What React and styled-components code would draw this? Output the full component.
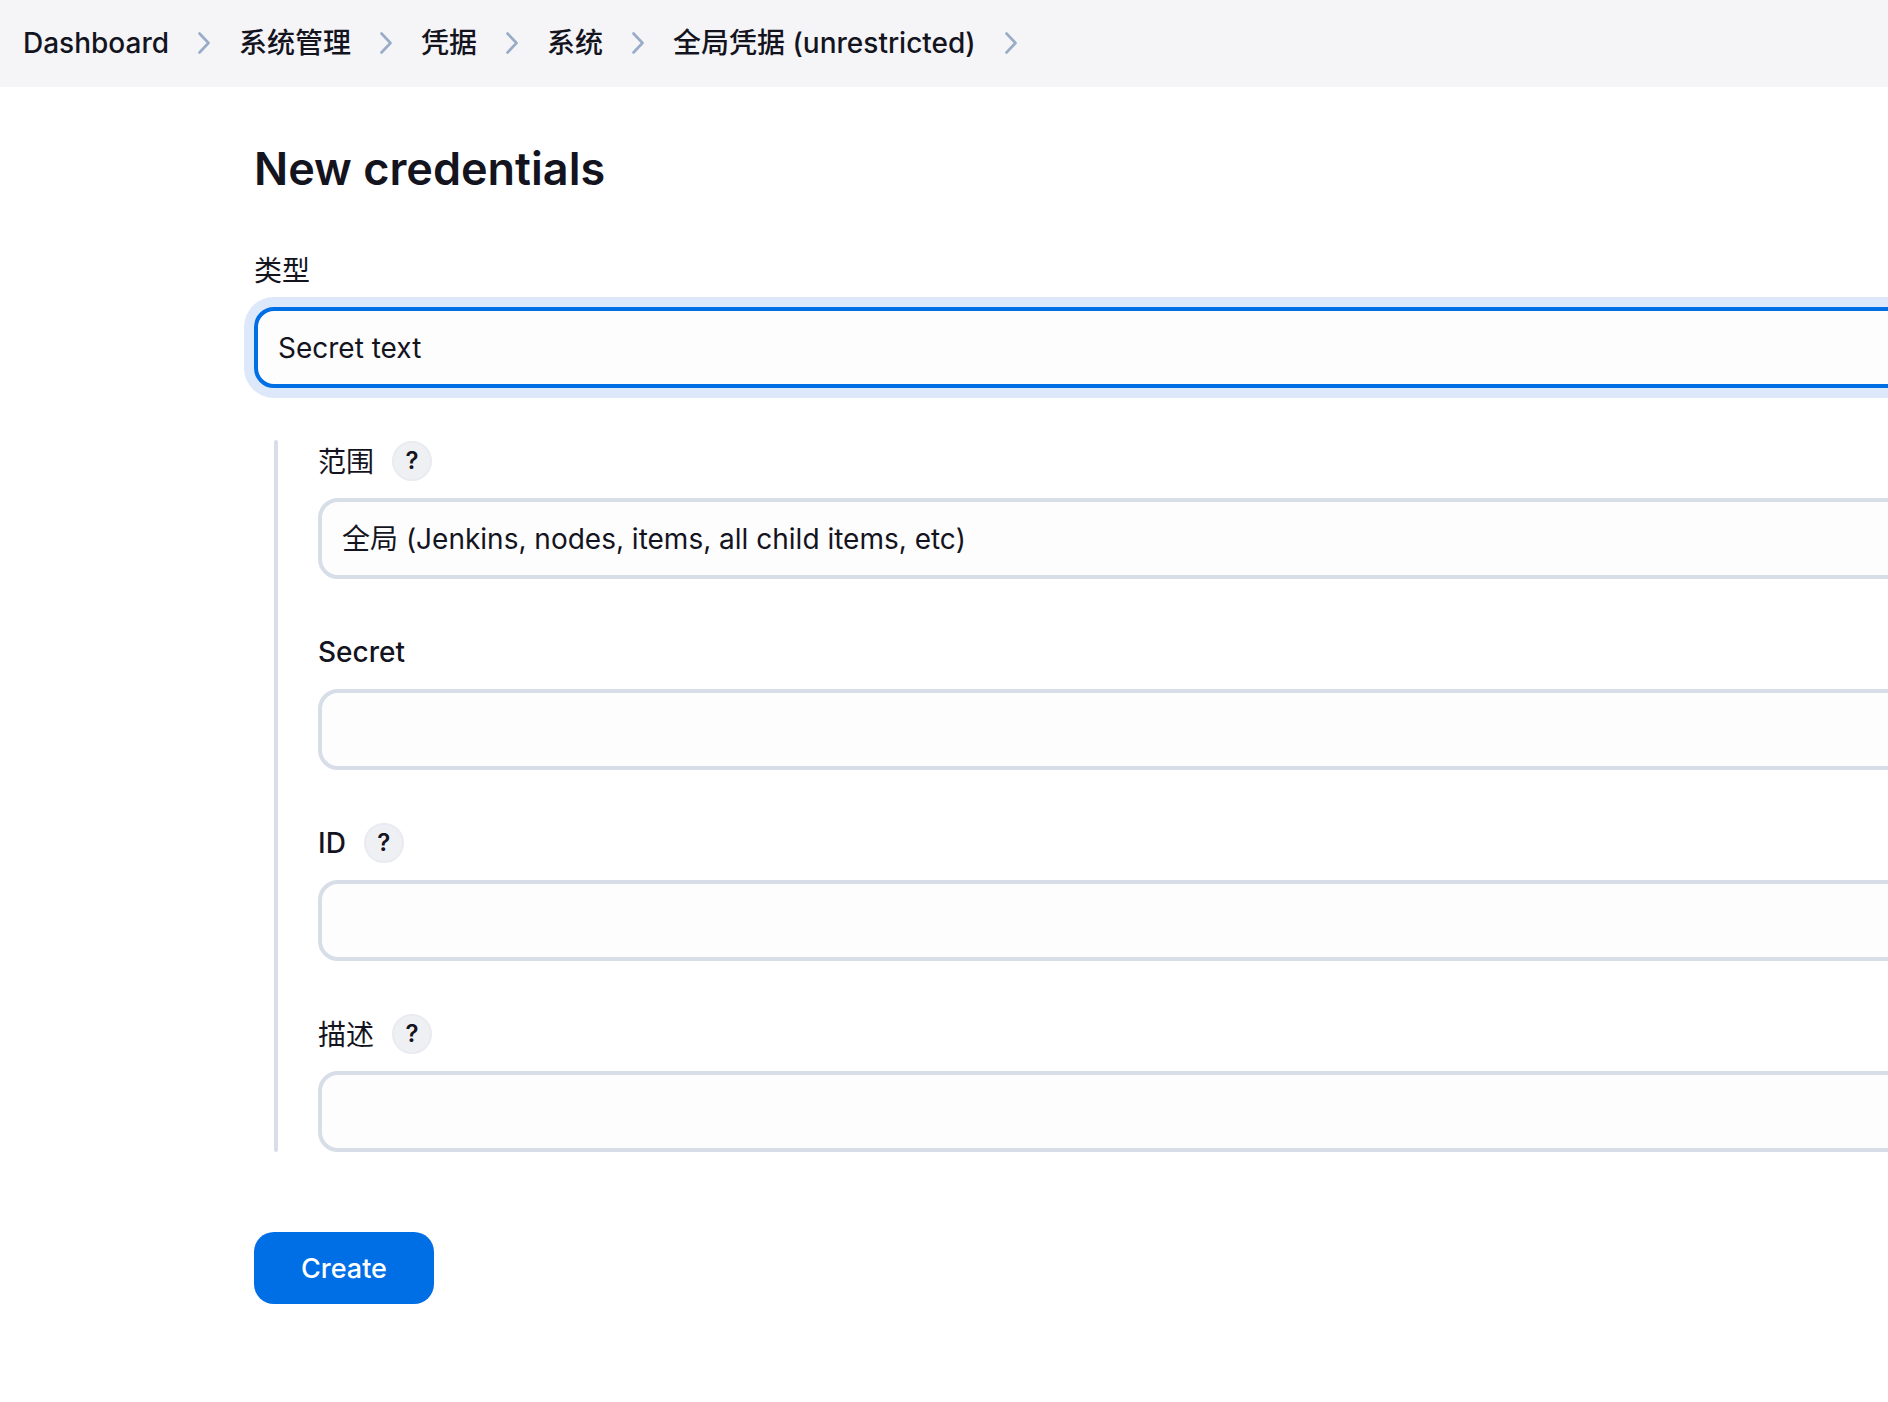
import React from "react";
import styled, { createGlobalStyle } from "styled-components";

const GlobalStyle = createGlobalStyle`
  *, *::before, *::after { box-sizing: border-box; }
  body {
    margin: 0;
    background: #fff;
    color: #14141f;
    font-family: Inter, "Noto Sans CJK SC", sans-serif;
    font-size: 28px;
    line-height: 42px;
  }
`;

const Page = styled.div`
  min-height: 100vh;
  overflow-x: clip;
`;

const Breadcrumbs = styled.nav`
  background: #f5f5f8;
  padding: 22px 23px 23px;
`;

const CrumbList = styled.ol`
  display: flex;
  align-items: center;
  gap: 29px;
  margin: 0;
  padding: 0;
  list-style: none;
`;

const Crumb = styled.li`
  display: flex;
  align-items: center;
  gap: 29px;
  white-space: nowrap;
`;

const CrumbLink = styled.a`
  color: inherit;
  font-weight: 500;
  text-decoration: none;
`;

const Chevron = styled.svg`
  flex: none;
  width: 12px;
  height: 22px;
  fill: none;
  stroke: #98acc7;
  stroke-width: 2.6;
  stroke-linecap: round;
  stroke-linejoin: round;
`;

const Main = styled.main`
  margin-right: -60px;
  padding: 54px 0 98px 254px;
`;

const Title = styled.h1`
  margin: 0 0 52px;
  font-size: 45px;
  font-weight: 600;
  line-height: 56px;
`;

const Form = styled.form`
  display: flex;
  flex-direction: column;
  gap: 52px;
`;

const Group = styled.div`
  position: relative;
  display: flex;
  flex-direction: column;
  gap: 52px;
  margin-left: 20px;
  padding-left: 44px;

  &::before {
    content: "";
    position: absolute;
    inset: 0 auto 0 0;
    width: 4px;
    border-radius: 2px;
    background: #d8dee8;
  }
`;

const Field = styled.div`
  display: flex;
  flex-direction: column;
  gap: 16px;
`;

const LabelRow = styled.div`
  display: flex;
  align-items: center;
  gap: 18px;
`;

const Label = styled.label`
  padding-top: ${(p) => (p.$light ? 2 : 0)}px;
  font-weight: ${(p) => (p.$light ? 400 : 500)};
  line-height: ${(p) => (p.$light ? 40 : 42)}px;
`;

const HelpButton = styled.button`
  display: grid;
  place-items: center;
  width: 40px;
  height: 40px;
  padding: 0;
  border: 2px solid #e9ebf1;
  border-radius: 50%;
  background: #eff0f4;
  color: inherit;
  font: 600 24px/36px Inter, sans-serif;
`;

const control = `
  appearance: none;
  display: block;
  width: 100%;
  height: 81px;
  padding: 0 20px;
  border: 4px solid #d7dee8;
  border-radius: 20px;
  outline: none;
  background: #fdfdfd;
  color: inherit;
  font-family: inherit;
  font-size: 28px;
  line-height: 42px;
`;

const Input = styled.input`
  ${control}
`;

const Select = styled.select`
  ${control}
  ${(p) => p.$active && "border-color: #006fe6; box-shadow: 0 0 0 10px #dde9fb;"}
`;

const SubmitButton = styled.button`
  align-self: flex-start;
  margin-top: 28px;
  padding: 16px 47px 14px;
  border: 0;
  border-radius: 20px;
  background: #006fe6;
  color: #fff;
  font: inherit;
  font-size: 27px;
  font-weight: 500;
  line-height: 42px;
`;

const crumbs = ["Dashboard", "系统管理", "凭据", "系统", "全局凭据 (unrestricted)"];

function FormField({ id, label, light, help, children }) {
  return (
    <Field>
      <LabelRow>
        <Label htmlFor={id} $light={light}>{label}</Label>
        {help && <HelpButton type="button" aria-label={`Help for ${label}`}>?</HelpButton>}
      </LabelRow>
      {children}
    </Field>
  );
}

export default function App() {
  return (
    <Page>
      <GlobalStyle />
      <Breadcrumbs aria-label="Breadcrumb">
        <CrumbList>
          {crumbs.map((name) => (
            <Crumb key={name}>
              <CrumbLink href="#">{name}</CrumbLink>
              <Chevron viewBox="0 0 12 22" aria-hidden="true">
                <path d="M1.5 1.5L10.5 11L1.5 20.5" />
              </Chevron>
            </Crumb>
          ))}
        </CrumbList>
      </Breadcrumbs>
      <Main>
        <Title>New credentials</Title>
        <Form>
          <FormField id="kind" label="类型" light>
            <Select id="kind" $active>
              <option>Secret text</option>
            </Select>
          </FormField>
          <Group>
            <FormField id="scope" label="范围" light help>
              <Select id="scope">
                <option>全局 (Jenkins, nodes, items, all child items, etc)</option>
              </Select>
            </FormField>
            <FormField id="secret" label="Secret">
              <Input id="secret" type="password" />
            </FormField>
            <FormField id="credential-id" label="ID" help>
              <Input id="credential-id" type="text" />
            </FormField>
            <FormField id="description" label="描述" light help>
              <Input id="description" type="text" />
            </FormField>
          </Group>
          <SubmitButton type="submit">Create</SubmitButton>
        </Form>
      </Main>
    </Page>
  );
}
